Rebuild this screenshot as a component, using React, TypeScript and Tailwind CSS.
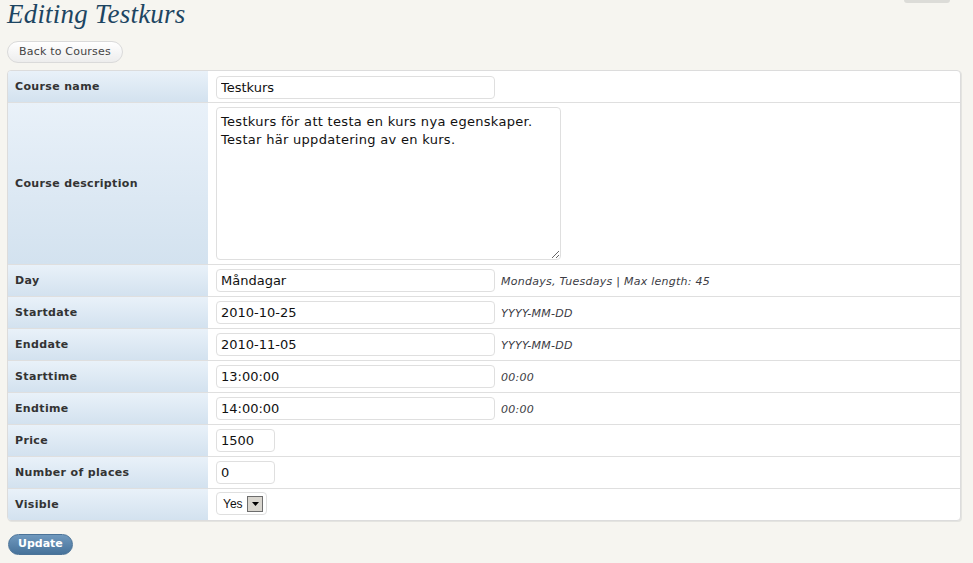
import { useState } from "react";

type Field = {
  label: string;
  value: string;
  width: string;
  hint?: string;
};

const fields: Field[] = [
  { label: "Day", value: "Måndagar", width: "w-[279px]", hint: "Mondays, Tuesdays | Max length: 45" },
  { label: "Startdate", value: "2010-10-25", width: "w-[279px]", hint: "YYYY-MM-DD" },
  { label: "Enddate", value: "2010-11-05", width: "w-[279px]", hint: "YYYY-MM-DD" },
  { label: "Starttime", value: "13:00:00", width: "w-[279px]", hint: "00:00" },
  { label: "Endtime", value: "14:00:00", width: "w-[279px]", hint: "00:00" },
  { label: "Price", value: "1500", width: "w-[59px]" },
  { label: "Number of places", value: "0", width: "w-[59px]" },
];

const font = "font-['DejaVu_Sans',Verdana,sans-serif]";

function Label({ text, tall }: { text: string; tall?: boolean }) {
  return (
    <div
      className={`w-[200px] shrink-0 flex items-center pl-[7px] pt-[2px] bg-gradient-to-b from-[#e9f1f9] to-[#d3e2ef] text-[11px] tracking-[0.35px] font-bold text-[#333] ${
        tall ? "h-[161px]" : "h-[31px]"
      }`}
    >
      {text}
    </div>
  );
}

function TextInput({ value, width }: { value: string; width: string }) {
  const [v, setV] = useState(value);
  return (
    <input
      value={v}
      onChange={(e) => setV(e.target.value)}
      className={`${width} h-[23px] border border-[#dfdfdf] rounded-[4px] bg-white px-[4px] text-[13px] text-[#111] outline-none ${font}`}
    />
  );
}

export default function App() {
  const [desc, setDesc] = useState(
    "Testkurs för att testa en kurs nya egenskaper.\nTestar här uppdatering av en kurs."
  );

  return (
    <div className={`relative min-h-screen bg-[#f6f5f0] px-[7px] ${font}`}>
      {/* cut-off help tab */}
      <div className="absolute right-[23px] top-0 w-[46px] h-[3px] bg-[#dcdcd8] rounded-b-[3px]" />

      <h2 className="font-['Liberation_Serif',Georgia,serif] italic text-[27px] tracking-[0.2px] leading-[27px] pt-[1px] text-[#1d4562]">
        Editing Testkurs
      </h2>

      <button className="mt-[13px] h-[22px] px-[11px] rounded-full border border-[#dadada] bg-gradient-to-b from-white to-[#ededed] text-[11px] tracking-[0.2px] text-[#444]">
        Back to Courses
      </button>

      <div className="mt-[7px] w-[954px] border border-[#dcdcdc] rounded-[4px] overflow-hidden bg-white shadow-[1px_1px_0_#e4e4e0]">
        <div className="flex border-b border-[#dfdfdf]">
          <Label text="Course name" />
          <div className="flex-1 pl-[8px] pt-[4px]">
            <TextInput value="Testkurs" width="w-[279px]" />
          </div>
        </div>

        <div className="flex border-b border-[#dfdfdf]">
          <Label text="Course description" tall />
          <div className="flex-1 pl-[8px] pt-[4px]">
            <textarea
              value={desc}
              onChange={(e) => setDesc(e.target.value)}
              className={`block w-[345px] h-[153px] border border-[#dfdfdf] rounded-[4px] bg-white px-[4px] pt-[5px] pb-[3px] text-[13px] tracking-[0.3px] leading-[18px] text-[#111] outline-none resize-y ${font}`}
            />
          </div>
        </div>

        {fields.map((f) => (
          <div key={f.label} className="flex border-b border-[#dfdfdf]">
            <Label text={f.label} />
            <div className="flex-1 flex items-start pl-[8px] pt-[4px]">
              <TextInput value={f.value} width={f.width} />
              {f.hint && (
                <span className="ml-[6px] mt-[5px] text-[11px] tracking-[0.25px] italic text-[#3c3c44]">{f.hint}</span>
              )}
            </div>
          </div>
        ))}

        <div className="flex">
          <Label text="Visible" />
          <div className="flex-1 pl-[8px] pt-[3px]">
            <div className="w-[51px] h-[23px] border border-[#dfdfdf] rounded-[4px] bg-white flex items-center pl-[6px] pr-[3px] justify-between">
              <span className="text-[12px] text-[#111] font-['Liberation_Sans',Arial,sans-serif]">Yes</span>
              <span className="w-[16px] h-[16px] border border-[#6d6d6d] bg-[#d9d6cf] flex items-center justify-center">
                <svg width="7" height="4" viewBox="0 0 7 4">
                  <path d="M0 0h7L3.5 4z" fill="#000" />
                </svg>
              </span>
            </div>
          </div>
        </div>
      </div>

      <button className="mt-[13px] ml-[1px] h-[21px] px-[9px] rounded-full border border-[#4b7398] bg-gradient-to-b from-[#7099be] to-[#46729a] text-[11px] font-bold text-white">
        Update
      </button>
    </div>
  );
}
